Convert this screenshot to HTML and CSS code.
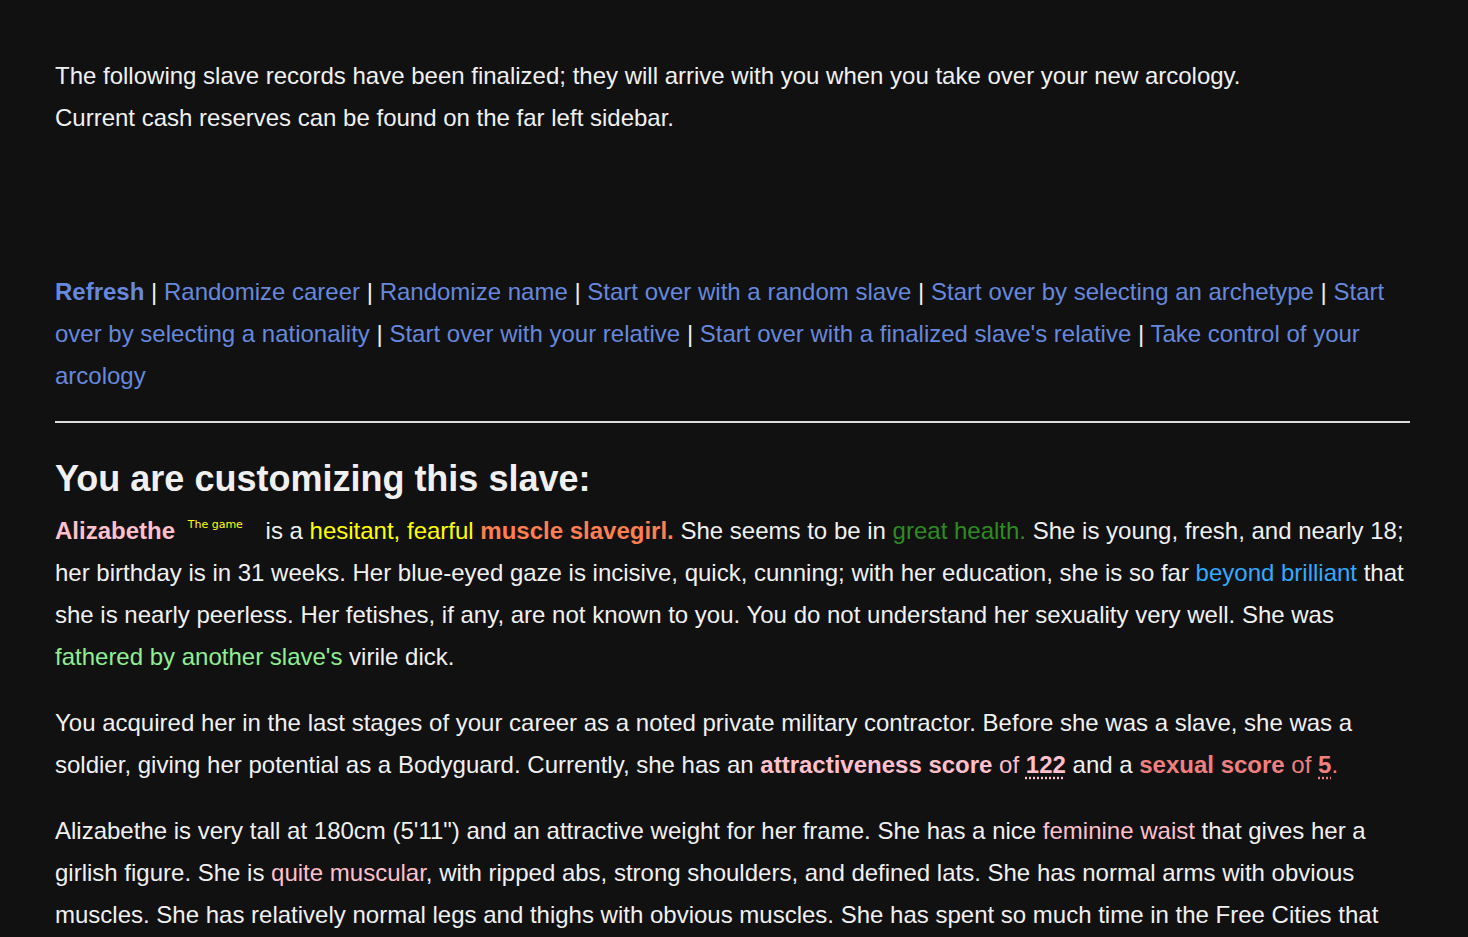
FILE: index.html
```html
<!DOCTYPE html>
<html>
<head>
<meta charset="utf-8">
<link rel="stylesheet" href="styles.css">
</head>
<body>
<div class="page">
  <div class="intro">
    <div>The following slave records have been finalized; they will arrive with you when you take over your new arcology.</div>
    <div>Current cash reserves can be found on the far left sidebar.</div>
  </div>
  <div class="links">
    <a class="strong">Refresh</a> | <a>Randomize career</a> | <a>Randomize name</a> | <a>Start over with a random slave</a> | <a>Start over by selecting an archetype</a> | <a>Start over by selecting a nationality</a> | <a>Start over with your relative</a> | <a>Start over with a finalized slave's relative</a> | <a>Take control of your arcology</a>
  </div>
  <hr class="rule">
  <h2 class="title">You are customizing this slave:</h2>
  <p class="para"><span class="name">Alizabethe</span> <span class="art">The game</span> is a <span class="yellow">hesitant, fearful</span> <span class="coral strong">muscle slavegirl.</span> She seems to be in <span class="health">great health.</span> She is young, fresh, and nearly 18; her birthday is in 31 weeks. Her blue-eyed gaze is incisive, quick, cunning; with her education, she is so far <span class="sky">beyond brilliant</span> that she is nearly peerless. Her fetishes, if any, are not known to you. You do not understand her sexuality very well. She was <span class="lgreen">fathered by another slave's</span> virile dick.</p>
  <p class="para">You acquired her in the last stages of your career as a noted private military contractor. Before she was a slave, she was a soldier, giving her potential as a Bodyguard. Currently, she has an <span class="pink"><span class="strong">attractiveness score</span> of <span class="strong dotted">122</span></span> and a <span class="lcoral"><span class="strong">sexual score</span> of <span class="strong dotted">5</span>.</span></p>
  <p class="para">Alizabethe is very tall at 180cm (5'11") and an attractive weight for her frame. She has a nice <span class="pink">feminine waist</span> that gives her a girlish figure. She is <span class="pink">quite muscular</span>, with ripped abs, strong shoulders, and defined lats. She has normal arms with obvious muscles. She has relatively normal legs and thighs with obvious muscles. She has spent so much time in the Free Cities that</p>
</div>
</body>
</html>
```
FILE: styles.css
```css
html, body {
  margin: 0;
  padding: 0;
  background: #111111;
}
body {
  color: #f0f0f0;
  font-family: "Liberation Sans", Arial, sans-serif;
  font-size: 24px;
  line-height: 42px;
  overflow: hidden;
  height: 937px;
}
.page {
  width: 1355px;
  padding: 55px 0 0 55px;
}
.intro {
  margin: 0 0 132px 0;
}
.links a {
  color: #6688dd;
  text-decoration: none;
}
.strong {
  font-weight: bold;
}
.rule {
  border: 0;
  border-top: 2px solid #dddddd;
  margin: 24px 0 0 0;
  height: 0;
}
.title {
  font-size: 36px;
  font-weight: bold;
  line-height: 42px;
  margin: 35px 0 10px 0;
  color: #f0f0f0;
}
.para {
  margin: 0 0 24px 0;
}
.name {
  color: pink;
  font-weight: bold;
}
.art {
  display: inline-block;
  font-family: "DejaVu Sans", Verdana, sans-serif;
  font-size: 11px;
  line-height: 12px;
  color: #ffff00;
  vertical-align: 11px;
  margin: 0 16px 0 6px;
}
.yellow { color: #ffff00; }
.coral { color: coral; }
.health { color: #2e8b22; }
.sky { color: #33aaff; }
.lgreen { color: lightgreen; }
.pink { color: pink; }
.lcoral { color: lightcoral; }
.dotted {
  text-decoration: underline dotted;
  text-underline-offset: 4px;
}
```
